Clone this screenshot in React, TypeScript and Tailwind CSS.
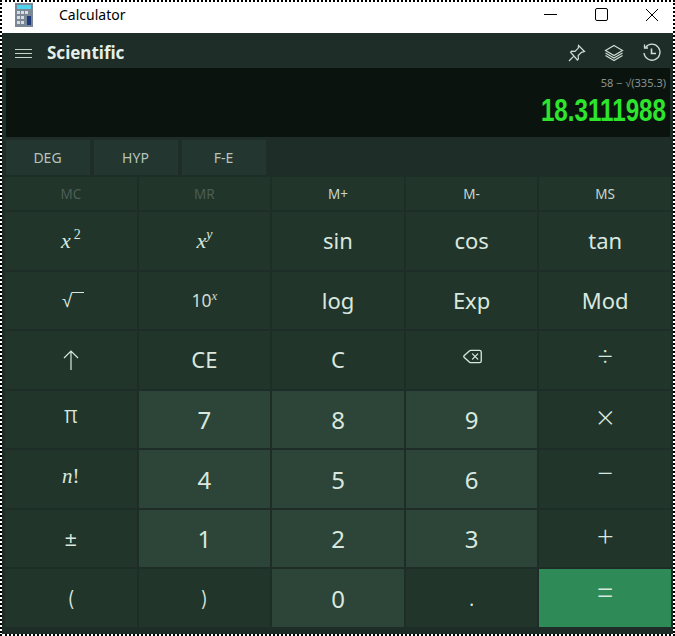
import type { ReactNode } from 'react'
import { Delete } from 'lucide-react'

type Key = {
  label: ReactNode
  kind?: 'fn' | 'num' | 'eq'
}

const mathCls = "font-['Liberation_Serif',serif] italic"
const opCls = "font-['Inter',sans-serif] font-extralight relative"
const lightCls = "font-['Inter',sans-serif] font-light relative"

const keys: Key[] = [
  { label: <span className={`${mathCls} text-[22px]`}>x<sup className="relative top-[-9px] ml-[3px] align-baseline text-[14px] not-italic">2</sup></span> },
  { label: <span className={`${mathCls} text-[22px]`}>x<sup className="relative top-[-9px] align-baseline text-[14px]">y</sup></span> },
  { label: 'sin' },
  { label: 'cos' },
  { label: 'tan' },
  { label: <span className="relative left-[2px] font-['DejaVu_Sans',sans-serif] text-[19px] font-light">√<span className="relative top-[-9px] ml-[-1px] inline-block h-px w-[12px] bg-[#d8e8df] align-middle" /></span> },
  { label: <span className="text-[17.5px] text-[#cbdbd2]">10<sup className={`${mathCls} relative top-[-7px] align-baseline text-[13px]`}>x</sup></span> },
  { label: 'log' },
  { label: 'Exp' },
  { label: 'Mod' },
  { label: <svg width="18" height="22" viewBox="0 0 18 22" fill="none" stroke="currentColor" strokeWidth="1.2"><path d="M9 21V2M2 9l7-7 7 7" /></svg> },
  { label: 'CE' },
  { label: 'C' },
  { label: <span className="relative top-[-3px] left-[1px]"><Delete size={21} strokeWidth={1.5} /></span> },
  { label: <span className={`${opCls} top-[-5px] text-[30px]`}>÷</span> },
  { label: <span className={`${lightCls} top-[-4px] text-[23px]`}>π</span> },
  { label: '7', kind: 'num' },
  { label: '8', kind: 'num' },
  { label: '9', kind: 'num' },
  { label: <span className={`${opCls} top-[-3px] text-[32px]`}>×</span> },
  { label: <span className={`${mathCls} relative top-[-2px] text-[21px]`}>n<span className="not-italic">!</span></span> },
  { label: '4', kind: 'num' },
  { label: '5', kind: 'num' },
  { label: '6', kind: 'num' },
  { label: <span className={`${opCls} top-[-8px] text-[30px]`}>−</span> },
  { label: <span className={`${lightCls} top-[1px] text-[23px]`}>±</span> },
  { label: '1', kind: 'num' },
  { label: '2', kind: 'num' },
  { label: '3', kind: 'num' },
  { label: <span className={`${opCls} top-[-4px] text-[32px]`}>+</span> },
  { label: <span className={`${lightCls} top-[1px] text-[21px]`}>(</span> },
  { label: <span className={`${lightCls} top-[1px] text-[21px]`}>)</span> },
  { label: '0', kind: 'num' },
  { label: <span className="relative top-[1px] text-[18px]">.</span> },
  { label: <span className={`${opCls} top-[-8px] text-[36px]`}>=</span>, kind: 'eq' },
]

const memory = ['MC', 'MR', 'M+', 'M-', 'MS']

function CalcIcon() {
  return (
    <svg width="18" height="24" viewBox="0 0 18 24">
      <rect x="0" y="0" width="18" height="24" fill="#7b8794" />
      <rect x="2" y="2" width="14" height="4" fill="#4fd3ee" />
      <rect x="2" y="8" width="3" height="3" fill="#d9dde2" />
      <rect x="6" y="8" width="3" height="3" fill="#d9dde2" />
      <rect x="10" y="8" width="3" height="3" fill="#d9dde2" />
      <rect x="2" y="13" width="3" height="3" fill="#d9dde2" />
      <rect x="6" y="13" width="3" height="3" fill="#d9dde2" />
      <rect x="2" y="18" width="3" height="3" fill="#d9dde2" />
      <rect x="6" y="18" width="3" height="3" fill="#d9dde2" />
      <rect x="12" y="13" width="4" height="9" fill="#1f3a7a" />
    </svg>
  )
}

function PinIcon() {
  return (
    <svg width="18" height="18" viewBox="0 0 18 18" fill="none" stroke="currentColor" strokeWidth="1.2">
      <path d="M10.5 1.5l6 6-3 .8-3.3 3.3.2 3.4-1 1L2.6 8.2l1-1 3.4.2 3.3-3.3zM5.8 12.2L1 17" />
    </svg>
  )
}

function StackIcon() {
  return (
    <svg width="20" height="18" viewBox="0 0 20 18" fill="none" stroke="currentColor" strokeWidth="1.2">
      <path d="M10 1.5l8.5 5L10 11.5 1.5 6.5zM1.5 9l8.5 5 8.5-5M1.5 11.5l8.5 5 8.5-5" />
    </svg>
  )
}

function HistoryIcon() {
  return (
    <svg width="20" height="20" viewBox="0 0 20 20" fill="none" stroke="currentColor" strokeWidth="1.3">
      <path d="M3.5 4.5A8 8 0 1 1 2 10" />
      <path d="M2.5 1.5v3.5h3.5" />
      <path d="M9.5 5.5v5h4.5" strokeWidth="1.6" />
    </svg>
  )
}

export default function App() {
  return (
    <div className="flex h-[636px] w-[675px] flex-col overflow-hidden border-2 border-dotted border-black bg-white font-['Noto_Sans',sans-serif] text-[#d8e8df]">
      <div className="flex h-[31px] shrink-0 items-center bg-white pb-[6px] text-black">
        <div className="ml-[13px] flex w-[44px]"><CalcIcon /></div>
        <span className="text-[14px]">Calculator</span>
        <div className="ml-auto flex items-center">
          <div className="flex w-[51px] justify-center"><span className="block h-px w-[13px] bg-black" /></div>
          <div className="flex w-[51px] justify-center"><span className="block h-[13px] w-[13px] rounded-[2px] border border-black" /></div>
          <div className="mr-[-4px] flex w-[50px] justify-center">
            <svg width="14" height="14" viewBox="0 0 14 14" stroke="black" strokeWidth="1"><path d="M1 1l12 12M13 1L1 13" /></svg>
          </div>
        </div>
      </div>

      <div className="flex min-h-0 flex-1 flex-col bg-[#1e2d27] pl-[3px] pr-[2px] pb-[7px]">
        <div className="flex h-[35px] shrink-0 items-center pt-[5px]">
          <div className="ml-[10px] flex w-[17px] flex-col gap-[3px]">
            <span className="h-px bg-[#c5d3cb]" />
            <span className="h-px bg-[#c5d3cb]" />
            <span className="h-px bg-[#c5d3cb]" />
          </div>
          <span className="ml-[15px] text-[17px] font-bold text-[#e3f0e9]">Scientific</span>
          <div className="ml-auto mr-[9px] flex items-center gap-[18px] text-[#d0ddd6]">
            <PinIcon />
            <StackIcon />
            <HistoryIcon />
          </div>
        </div>

        <div className="mx-px h-[69px] shrink-0 bg-[#0b130f] pr-[4px] text-right">
          <div className="pt-[7px] text-[11px] leading-[16px] text-[#8a938e]">58 − √(335.3)</div>
          <div className="mt-[5px] origin-right scale-x-[0.78] font-['Liberation_Sans',sans-serif] text-[31px] leading-[30px] font-bold text-[#2de52d]">18.3111988</div>
        </div>

        <div className="flex h-[40px] shrink-0 items-center gap-[4px] pl-px">
          {['DEG', 'HYP', 'F-E'].map(t => (
            <div key={t} className="flex h-[35px] w-[84px] items-center justify-center bg-[#243630] pr-px text-[14px] text-[#b4c4bb]">{t}</div>
          ))}
        </div>

        <div className="grid min-h-0 flex-1 grid-cols-5 grid-rows-[33px_repeat(7,1fr)] gap-[2px]">
          {memory.map((m, i) => (
            <div key={m} className={`flex items-center justify-center bg-[#22352b] pt-[2px] text-[13.5px] ${i < 2 ? 'text-[#4c5e55]' : 'text-[#c8d8cf]'}`}>{m}</div>
          ))}
          {keys.map((k, i) => (
            <div
              key={i}
              className={`flex items-center justify-center text-[22px] ${
                k.kind === 'num' ? 'bg-[#2d4438] pt-px text-[24px]' : k.kind === 'eq' ? 'bg-[#2e8b57]' : 'bg-[#22352b]'
              }`}
            >
              {k.label}
            </div>
          ))}
        </div>
      </div>
    </div>
  )
}
